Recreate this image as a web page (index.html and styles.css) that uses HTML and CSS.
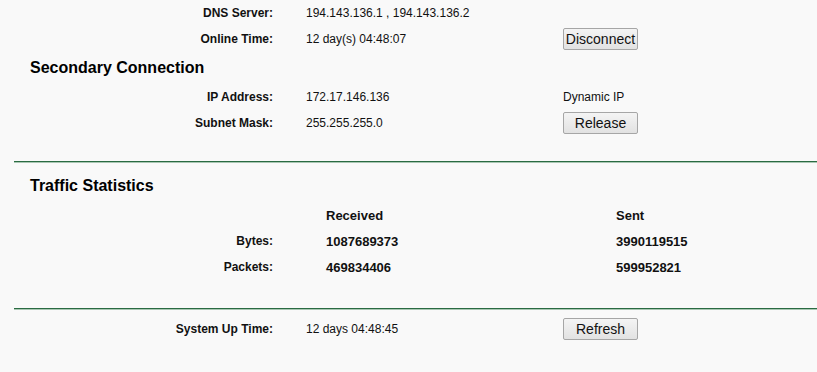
FILE: index.html
```html
<!DOCTYPE html>
<html>
<head>
<meta charset="utf-8">
<link rel="stylesheet" href="styles.css">
</head>
<body>
<div class="page">
  <div class="row">
    <div class="label">DNS Server:</div>
    <div class="value">194.143.136.1 , 194.143.136.2</div>
    <div class="extra"></div>
  </div>
  <div class="row">
    <div class="label">Online Time:</div>
    <div class="value">12 day(s) 04:48:07</div>
    <div class="extra"><button class="btn">Disconnect</button></div>
  </div>
  <div class="heading">Secondary Connection</div>
  <div class="row">
    <div class="label">IP Address:</div>
    <div class="value">172.17.146.136</div>
    <div class="extra">Dynamic IP</div>
  </div>
  <div class="row">
    <div class="label">Subnet Mask:</div>
    <div class="value">255.255.255.0</div>
    <div class="extra"><button class="btn">Release</button></div>
  </div>
  <div class="gap-a"></div>
  <div class="rule"></div>
  <div class="heading heading-traffic">Traffic Statistics</div>
  <div class="row traffic">
    <div class="label"></div>
    <div class="value strong">Received</div>
    <div class="extra strong">Sent</div>
  </div>
  <div class="row traffic">
    <div class="label">Bytes:</div>
    <div class="value strong">1087689373</div>
    <div class="extra strong">3990119515</div>
  </div>
  <div class="row traffic">
    <div class="label">Packets:</div>
    <div class="value strong">469834406</div>
    <div class="extra strong">599952821</div>
  </div>
  <div class="gap-b"></div>
  <div class="rule"></div>
  <div class="row row-last">
    <div class="label">System Up Time:</div>
    <div class="value">12 days 04:48:45</div>
    <div class="extra"><button class="btn">Refresh</button></div>
  </div>
</div>
</body>
</html>
```

FILE: styles.css
```css
html, body {
  margin: 0;
  padding: 0;
  background: #f9f9f9;
}
body {
  font-family: "Liberation Sans", Arial, sans-serif;
  font-size: 12px;
  color: #111;
}
.page {
  width: 817px;
  height: 372px;
  overflow: hidden;
}
.row {
  display: grid;
  grid-template-columns: 273px 290px 1fr;
  height: 26px;
  align-items: center;
}
.row.traffic {
  grid-template-columns: 273px 343px 1fr;
}
.label {
  text-align: right;
  font-weight: bold;
}
.value {
  padding-left: 33px;
}
.traffic .value {
  padding-left: 53px;
}
.strong {
  font-weight: bold;
  font-size: 13px;
}
.heading {
  height: 32px;
  line-height: 32px;
  padding-left: 30px;
  font-size: 16px;
  font-weight: bold;
  color: #000;
}
.heading-traffic {
  margin-top: 7px;
}
.gap-a {
  height: 25px;
}
.gap-b {
  height: 28px;
}
.rule {
  margin-left: 14px;
  height: 1px;
  background: #2a6b42;
  border-bottom: 1px solid #a9c7b3;
}
.row-last {
  margin-top: 6px;
}
.btn {
  width: 75px;
  height: 22px;
  padding: 0;
  font-family: "Liberation Sans", Arial, sans-serif;
  font-size: 14px;
  color: #111;
  background: linear-gradient(#f4f4f4, #e2e2e2);
  border: 1px solid #a6a6a6;
  border-radius: 2px;
  white-space: nowrap;
  overflow: hidden;
}
```
